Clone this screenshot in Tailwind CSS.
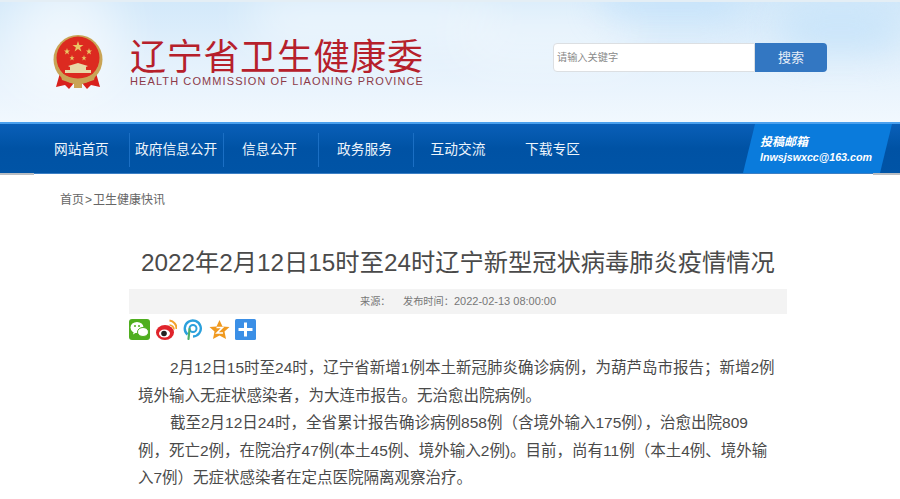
<!DOCTYPE html>
<html lang="zh-CN">
<head>
    <meta charset="UTF-8">
    <title>2022年2月12日15时至24时辽宁新型冠状病毒肺炎疫情情况</title>
    <script src="https://cdn.jsdelivr.net/npm/@tailwindcss/browser@4"></script>
</head>
<body class="h-[499px] w-[900px] overflow-hidden bg-white font-['Liberation_Sans','Noto_Sans_CJK_SC',sans-serif]">

    <!-- header -->
    <header class="relative h-[124px] overflow-hidden border-t-2 border-b-2 border-t-[#e4eef5] border-b-[#4aa0ee] bg-gradient-to-b from-[#d3e9fa] via-[#e4f1fc] to-[#f1f8fe]">
        <div class="absolute -top-6 left-[10px] h-[120px] w-[110px] rounded-full bg-white/55 blur-xl"></div>
        <div class="absolute -top-2 left-[250px] h-[50px] w-[240px] rounded-full bg-white/55 blur-xl"></div>
        <div class="absolute top-0 left-[460px] h-[60px] w-[180px] rounded-full bg-white/45 blur-xl"></div>
        <div class="absolute -top-4 left-[600px] h-[30px] w-[140px] rounded-full bg-[#bfe0fb]/70 blur-lg"></div>
        <div class="absolute top-[2px] right-0 h-[50px] w-[120px] rounded-full bg-[#c4e2fa]/70 blur-lg"></div>

        <div class="relative flex h-full items-start">
            <!-- emblem -->
            <svg class="mt-[33px] ml-[53px] h-[56px] w-[50px] shrink-0" viewBox="0 0 50 56">
                <path d="M7 38 L3 52 L12 50 L16 54 L21 48 L29 48 L34 54 L38 50 L47 52 L43 38 Z" fill="#d8201c"/>
                <circle cx="25" cy="24.500" r="24.500" fill="#c9a456"/>
                <circle cx="25" cy="23" r="21.500" fill="#dc2a20"/>
                <polygon points="25,6 26.300,10 30.500,10 27.100,12.500 28.400,16.500 25,14 21.600,16.500 22.900,12.500 19.500,10 23.700,10" fill="#e9c765"/>
                <polygon points="14,13 14.800,15.500 17,15.500 15.200,17 16,19.500 14,18 12,19.500 12.800,17 11,15.500 13.200,15.500" fill="#e9c765"/>
                <polygon points="36,13 36.800,15.500 39,15.500 37.200,17 38,19.500 36,18 34,19.500 34.800,17 33,15.500 35.200,15.500" fill="#e9c765"/>
                <polygon points="19,20 19.700,22.200 21.500,22.200 20,23.500 20.700,25.500 19,24.300 17.300,25.500 18,23.500 16.500,22.200 18.300,22.200" fill="#e9c765"/>
                <polygon points="31,20 31.700,22.200 33.500,22.200 32,23.500 32.700,25.500 31,24.300 29.300,25.500 30,23.500 28.500,22.200 30.300,22.200" fill="#e9c765"/>
                <path d="M15 31 L25 28 L35 31 L33 32 L33 35 L38 35 L38 38 L12 38 L12 35 L17 35 L17 32 Z" fill="#e8d9a8"/>
                <path d="M7 37 Q25 50 43 37 L41 45 Q25 52 9 45 Z" fill="#c9a456"/>
                <rect x="21" y="44" width="8" height="9" fill="#c9a456"/>
            </svg>

            <div class="ml-[27px] mt-[31px] w-[300px] shrink-0">
                <div class="text-[36px] leading-[42px] tracking-[0.7px] whitespace-nowrap text-[#b6202b] font-['Noto_Sans_CJK_SC',sans-serif]">辽宁省卫生健康委</div>
                <div class="mt-[-1px] text-[11px] leading-[14px] tracking-[1.1px] whitespace-nowrap text-[#8c3a48]">HEALTH COMMISSION OF LIAONING PROVINCE</div>
            </div>

            <!-- search -->
            <div class="mt-[41px] ml-[123px] flex h-[29px] w-[274px] shrink-0">
                <div class="flex w-[202px] items-center rounded-l-sm border border-[#dcdfe2] bg-white pl-[3px] text-[10.2px] text-[#8a8a8a]">请输入关键字</div>
                <div class="flex w-[72px] items-center justify-center rounded-r-sm bg-[#3377c2] text-[13px] text-[#e6eef8]">搜索</div>
            </div>
        </div>
    </header>

    <!-- nav -->
    <nav class="relative flex h-[50px] items-center bg-gradient-to-b from-[#0a5fb8] via-[#0052a4] to-[#0054a6] border-b border-b-[#3c7fc4] pt-[3px] text-[13.7px] text-[#eef5fc]">
        <a class="ml-[54px] w-[75px]">网站首页</a>
        <a class="flex h-[34px] w-[94px] items-center border-l border-[#1b6fc4] pl-[5px]">政府信息公开</a>
        <a class="flex h-[34px] w-[95px] items-center justify-center border-l border-[#1b6fc4] pr-[3px]">信息公开</a>
        <a class="flex h-[34px] w-[95px] items-center justify-center border-l border-[#1b6fc4] pr-[3px]">政务服务</a>
        <a class="flex h-[34px] w-[95px] items-center justify-center border-l border-[#1b6fc4] pr-[6px]">互动交流</a>
        <a class="flex h-[34px] w-[94px] items-center justify-center pr-[5px]">下载专区</a>

        <div class="absolute top-0 right-0 h-[49px] w-[157px] overflow-hidden">
            <div class="h-[49px] w-[149px] bg-[#0a7bdc] pt-[12px] pl-[17px] [clip-path:polygon(12px_0,100%_0,137px_100%,0_100%)]">
                <div class="text-[12px] leading-[13px] font-bold italic text-white">投稿邮箱</div>
                <div class="mt-[2px] text-[10.7px] leading-[13px] font-bold italic whitespace-nowrap text-white">lnwsjswxcc@163.com</div>
            </div>
        </div>
        <div class="absolute -bottom-[2px] left-0 h-[2px] w-[34px] bg-[#b9bdc2]"></div>
        <div class="absolute -bottom-[2px] right-0 h-[2px] w-[27px] bg-[#b9bdc2]"></div>
    </nav>

    <!-- article -->
    <main>
        <div class="ml-[60px] pt-[18px] text-[12px] leading-[16px] text-[#666]">首页<span class="mx-[1px]">&gt;</span>卫生健康快讯</div>

        <h1 class="mt-[38px] ml-[16px] text-center text-[24.27px] leading-[34px] text-[#4a4a4a]">2022年2月12日15时至24时辽宁新型冠状病毒肺炎疫情情况</h1>

        <div class="mt-[9px] ml-[129px] flex h-[25px] w-[658px] items-center bg-[#f3f3f3] pl-[231px] text-[10.2px] text-[#777]">
            <span class="w-[43px]">来源：</span>
            <span>发布时间：<span class="text-[11px]">2022-02-13 08:00:00</span></span>
        </div>

        <!-- share -->
        <div class="ml-[129px] mt-[5px] flex h-[21px] items-center gap-[5.5px]">
            <svg class="h-[21px] w-[21px]" viewBox="0 0 21 21">
                <rect width="21" height="21" rx="3" fill="#4fae1f"/>
                <ellipse cx="8" cy="8.500" rx="6.500" ry="5.500" fill="#fff"/>
                <path d="M5 12 L4 15.500 L8 13 Z" fill="#fff"/>
                <ellipse cx="14" cy="13" rx="5.500" ry="4.500" fill="#fff" stroke="#4fae1f"/>
                <circle cx="6" cy="7" r="1" fill="#4fae1f"/>
                <circle cx="10" cy="7" r="1" fill="#4fae1f"/>
            </svg>
            <svg class="h-[21px] w-[21px]" viewBox="0 0 21 21">
                <ellipse cx="9" cy="13.500" rx="9" ry="7.500" fill="#e0242b"/>
                <ellipse cx="8.500" cy="14.500" rx="5.500" ry="4" fill="#fff"/>
                <circle cx="8" cy="14.500" r="2.800" fill="#222"/>
                <path d="M13.500 6 A4.500 4.500 0 0 1 18 10.500" fill="none" stroke="#f2a22b" stroke-width="1.600"/>
                <path d="M13.500 1.500 A8 8 0 0 1 20.500 10" fill="none" stroke="#f2a22b" stroke-width="2"/>
            </svg>
            <svg class="h-[21px] w-[21px]" viewBox="0 0 21 21">
                <path d="M5.500 15.500 A8 8 0 1 1 11 17.500" fill="none" stroke="#2ba0dc" stroke-width="2.400"/>
                <circle cx="11" cy="9.500" r="3.500" fill="none" stroke="#2ba0dc" stroke-width="2"/>
                <path d="M7.500 10 L6.500 20" fill="none" stroke="#4fb06a" stroke-width="2.200" stroke-linecap="round"/>
            </svg>
            <svg class="h-[21px] w-[21px]" viewBox="0 0 21 21">
                <polygon points="10.500,1 13.500,7.500 20.500,8 15.500,12.500 17,20 10.500,16.500 4,20 5.500,12.500 0.500,8 7.500,7.500" fill="#f0991f"/>
                <path d="M7.500 8.500 H13.500 L8 14 H14" fill="none" stroke="#fff" stroke-width="1.600"/>
            </svg>
            <svg class="h-[21px] w-[21px]" viewBox="0 0 21 21">
                <rect width="21" height="21" rx="1.500" fill="#3b8fe6"/>
                <rect x="9" y="3.500" width="3" height="14" fill="#fff"/>
                <rect x="3.500" y="9" width="14" height="3" fill="#fff"/>
            </svg>
        </div>

        <div class="ml-[138px] mt-[14px] w-[640px] text-[15.5px] leading-[27.5px] text-[#4a4a4a]">
            <p class="indent-[32px]">2月12日15时至24时，辽宁省新增1例本土新冠肺炎确诊病例，为葫芦岛市报告；新增2例境外输入无症状感染者，为大连市报告。无治愈出院病例。</p>
            <p class="indent-[32px]">截至2月12日24时，全省累计报告确诊病例858例（含境外输入175例），治愈出院809例，死亡2例，在院治疗47例(本土45例、境外输入2例)。目前，尚有11例（本土4例、境外输入7例）无症状感染者在定点医院隔离观察治疗。</p>
        </div>
    </main>
</body>
</html>
